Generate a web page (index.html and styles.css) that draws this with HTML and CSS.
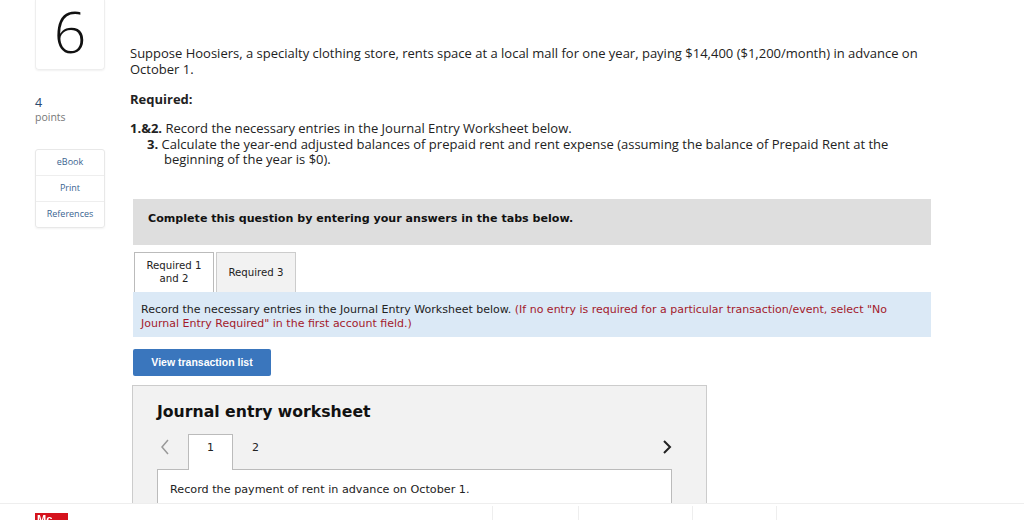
FILE: index.html
```html
<!DOCTYPE html>
<html lang="en">
<head>
  <meta charset="UTF-8" />
  <title>Question 6</title>
  <link rel="stylesheet" href="styles.css">
</head>
<body>
  <div class="page">
    <div class="sidebar">
      <div class="qnum">6</div>
      <div class="points">
        <div class="points-value">4</div>
        <div class="points-label">points</div>
      </div>
      <div class="tools">
        <div class="tool">eBook</div>
        <div class="tool">Print</div>
        <div class="tool">References</div>
      </div>
    </div>

    <div class="main">
      <p class="intro">Suppose Hoosiers, a specialty clothing store, rents space at a local mall for one year, paying $14,400 ($1,200/month) in advance on October 1.</p>
      <p class="req-title">Required:</p>
      <div class="req-list">
        <div class="req-item"><b>1.&amp;2.</b> Record the necessary entries in the Journal Entry Worksheet below.</div>
        <div class="req-item indent"><b>3.</b> Calculate the year-end adjusted balances of prepaid rent and rent expense (assuming the balance of Prepaid Rent at the beginning of the year is $0).</div>
      </div>

      <div class="worksheet">
        <div class="banner">Complete this question by entering your answers in the tabs below.</div>
        <div class="tabs">
          <div class="tab active">Required 1<br>and 2</div>
          <div class="tab">Required 3</div>
        </div>
        <div class="info">Record the necessary entries in the Journal Entry Worksheet below. <span class="warn">(If no entry is required for a particular transaction/event, select "No Journal Entry Required" in the first account field.)</span></div>
        <button class="btn">View transaction list</button>

        <div class="journal">
          <h2>Journal entry worksheet</h2>
          <div class="jnav">
            <span class="arrow prev">
              <svg width="10" height="16" viewBox="0 0 10 16"><path d="M8 1 L2 8 L8 15" fill="none" stroke="#999" stroke-width="1.5"/></svg>
            </span>
            <div class="jtab active">1</div>
            <div class="jtab">2</div>
            <span class="arrow next">
              <svg width="10" height="16" viewBox="0 0 10 16"><path d="M2 2 L8 8 L2 14" fill="none" stroke="#222" stroke-width="2"/></svg>
            </span>
          </div>
          <div class="jbody">Record the payment of rent in advance on October 1.</div>
        </div>
      </div>
    </div>
  </div>

  <div class="footer">
    <div class="logo">Mc</div>
    <div class="fnav">
      <div class="fitem"></div>
      <div class="fitem"></div>
      <div class="fitem"></div>
      <div class="fitem"></div>
    </div>
  </div>
</body>
</html>
```

FILE: styles.css
```css
body {
  margin: 0;
  font-family: "Open Sans", Lato, sans-serif;
  color: #222;
  background: #fff;
}
.page {
  display: flex;
  padding-left: 35px;
}
.sidebar {
  width: 70px;
  flex-shrink: 0;
}
.qnum {
  height: 69px;
  border: 1px solid #eee;
  border-top: none;
  border-radius: 0 0 4px 4px;
  box-shadow: 0 1px 2px rgba(0,0,0,0.06);
  text-align: center;
  font-size: 57px;
  font-weight: 300;
  line-height: 62px;
  color: #111;
}
.points {
  margin-top: 25px;
}
.points-value {
  font-size: 12.5px;
  color: #2b4a6e;
  line-height: 15px;
}
.points-label {
  font-size: 10.5px;
  color: #777;
  line-height: 14px;
}
.tools {
  margin-top: 25px;
  border: 1px solid #e8e8e8;
  border-radius: 3px;
  box-shadow: 0 1px 2px rgba(0,0,0,0.05);
}
.tool {
  height: 25px;
  line-height: 24px;
  text-align: center;
  font-size: 9px;
  color: #3a6491;
  border-bottom: 1px solid #eee;
}
.tool:last-child {
  border-bottom: none;
}
.main {
  margin-left: 25px;
  width: 802px;
}
.intro {
  margin: 45px 0 0;
  font-size: 13px;
  line-height: 16px;
  padding-right: 10px;
}
.req-title {
  margin: 14px 0 0;
  font-size: 13px;
  font-weight: bold;
  line-height: 16px;
}
.req-list {
  margin-top: 14px;
  font-size: 13px;
  line-height: 15.5px;
}
.req-item.indent {
  padding-left: 34px;
  text-indent: -17px;
  padding-right: 35px;
}
.worksheet {
  margin: 31px 0 0 3px;
  width: 798px;
  font-family: "DejaVu Sans", Verdana, sans-serif;
}
.banner {
  background: #dedede;
  height: 46px;
  line-height: 40px;
  padding-left: 15px;
  font-size: 11.1px;
  font-weight: bold;
  color: #111;
}
.tabs {
  display: flex;
  gap: 2px;
  margin-top: 7px;
  padding-left: 1px;
}
.tab {
  width: 78px;
  height: 39px;
  border: 1px solid #ccc;
  border-bottom: none;
  background: #f2f2f2;
  font-size: 10.2px;
  line-height: 13px;
  text-align: center;
  display: flex;
  align-items: center;
  justify-content: center;
  color: #222;
}
.tab.active {
  background: #fff;
  border-color: #bbb;
}
.info {
  background: #dbe9f6;
  padding: 11px 8px 5px;
  font-size: 11px;
  line-height: 14px;
  color: #222;
  height: 29px;
}
.warn {
  color: #a3192b;
}
.btn {
  display: block;
  margin-top: 12px;
  width: 138px;
  height: 27px;
  border: none;
  border-radius: 2px;
  background: #3a76bd;
  color: #fff;
  font-family: "Liberation Sans", Arial, sans-serif;
  font-size: 10.5px;
  font-weight: bold;
}
.journal {
  margin-top: 9px;
  margin-left: -1px;
  width: 575px;
  height: 140px;
  background: #f2f2f2;
  border: 1px solid #ccc;
  padding: 0 34px 0 24px;
  box-sizing: border-box;
}
.journal h2 {
  margin: 16px 0 0;
  font-size: 15.7px;
  font-weight: bold;
  line-height: 20px;
  color: #111;
}
.jnav {
  display: flex;
  align-items: flex-end;
  margin-top: 12px;
  height: 35px;
}
.arrow {
  display: flex;
  align-items: center;
  align-self: flex-start;
  height: 26px;
}
.arrow.prev {
  width: 31px;
  padding-left: 3px;
  box-sizing: border-box;
}
.arrow.next {
  margin-left: auto;
}
.jtab {
  width: 43px;
  height: 34px;
  line-height: 26px;
  text-align: center;
  font-size: 11px;
  color: #222;
  border: 1px solid transparent;
  border-bottom: none;
  position: relative;
  z-index: 1;
}
.jtab.active {
  background: #fff;
  border-color: #bbb;
  height: 35px;
  margin-bottom: -1px;
}
.jbody {
  background: #fff;
  border: 1px solid #bbb;
  height: 60px;
  padding: 13px 12px;
  font-size: 11.2px;
  color: #222;
  box-sizing: border-box;
}
.footer {
  position: fixed;
  left: 0;
  right: 0;
  bottom: 0;
  height: 16px;
  background: #fff;
  border-top: 1px solid #eee;
  display: flex;
}
.logo {
  margin: 9px 0 0 35px;
  width: 33px;
  height: 14px;
  background: #d5121c;
  color: #fff;
  font-family: "Liberation Sans", Arial, sans-serif;
  font-weight: bold;
  font-size: 11px;
  line-height: 13px;
  padding-left: 2px;
  box-sizing: border-box;
}
.fnav {
  display: flex;
  margin-left: 424px;
}
.fitem {
  border-left: 1px solid #eee;
  margin-top: 2px;
}
.fitem:nth-child(1) { width: 85px; }
.fitem:nth-child(2) { width: 113px; }
.fitem:nth-child(3) { width: 83px; }
.fitem:nth-child(4) { width: 1px; }
```
